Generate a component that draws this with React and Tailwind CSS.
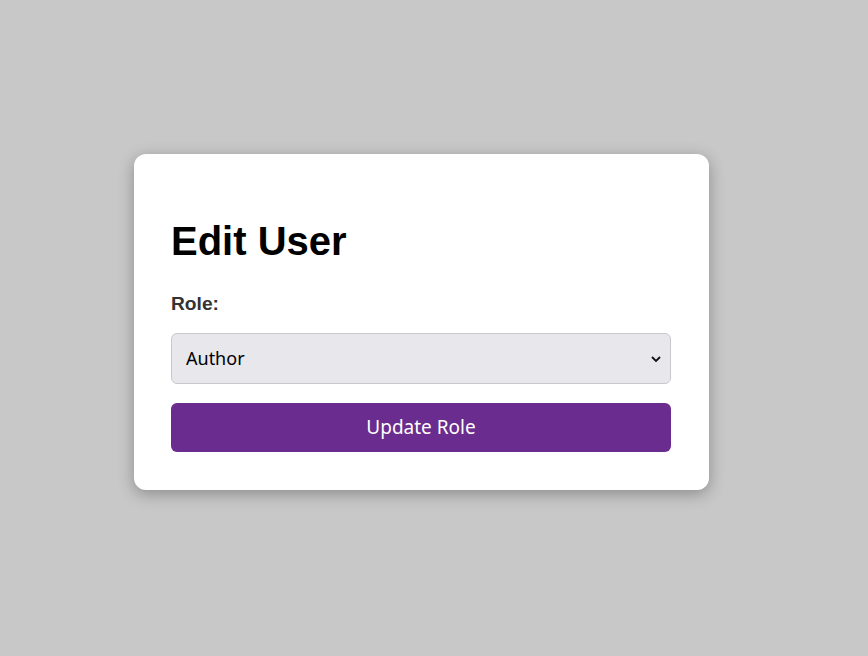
import { useState } from "react";

export default function App() {
  const [role, setRole] = useState("author");

  return (
    <div className="min-h-screen w-full bg-[#c8c8c8] flex items-center justify-center pr-[25px] pb-[12px]">
      <div className="w-[575px] bg-white rounded-[12px] shadow-[0_4px_16px_rgba(0,0,0,0.3)] pl-[37px] pr-[38px] pt-[64px] pb-[38px]">
        <h1 className="text-[40px] leading-[46px] font-bold text-black font-['Liberation_Sans',Arial,sans-serif]">
          Edit User
        </h1>

        <label className="block mt-[29px] text-[19.2px] leading-[22px] font-bold text-[#333] font-['Liberation_Sans',Arial,sans-serif]">
          Role:
        </label>

        <div className="relative mt-[18px]">
          <select
            value={role}
            onChange={(e) => setRole(e.target.value)}
            className="appearance-none w-full h-[51px] rounded-[6px] border border-[#c9c9cc] bg-[#e8e7ec] pl-[14px] pr-10 text-[18px] text-black font-['Noto_Sans',sans-serif] outline-none"
          >
            <option value="author">Author</option>
            <option value="editor">Editor</option>
            <option value="admin">Admin</option>
          </select>
          {/* chevron */}
          <svg
            className="absolute right-[9px] top-1/2 -translate-y-1/2 pointer-events-none"
            width="12"
            height="12"
            viewBox="0 0 12 12"
            fill="none"
          >
            <path d="M2 4l4 4 4-4" stroke="#111" strokeWidth="1.8" />
          </svg>
        </div>

        <button className="mt-[19px] w-full h-[49px] rounded-[6px] bg-[#6a2c8e] text-white text-[19px] font-['Noto_Sans',sans-serif]">
          Update Role
        </button>
      </div>
    </div>
  );
}
